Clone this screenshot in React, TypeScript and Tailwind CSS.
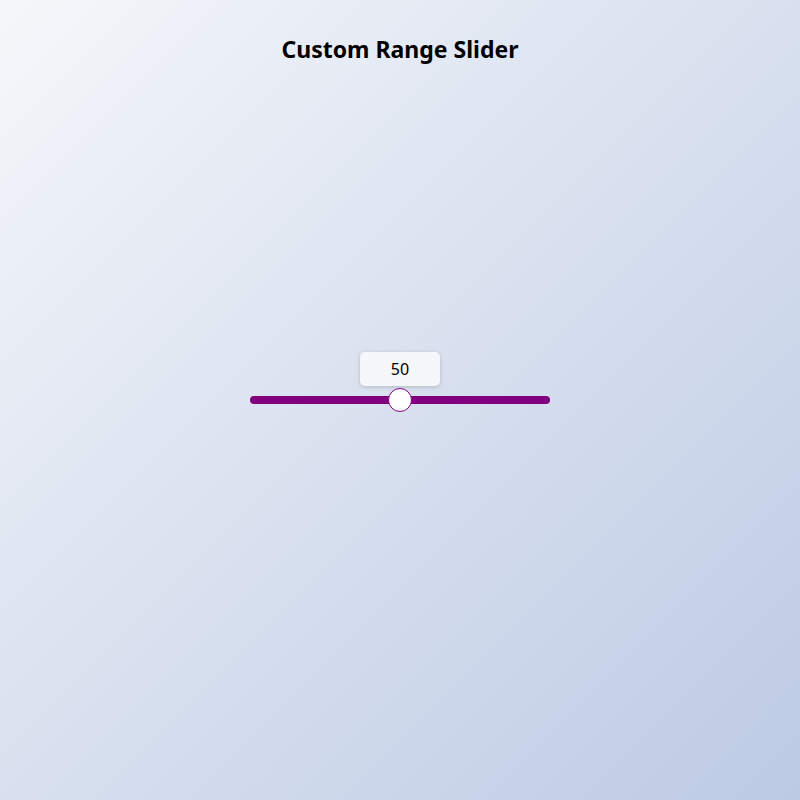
import { useState } from "react";

export default function App() {
  const [value] = useState(50);

  return (
    <div
      className="h-[800px] w-full flex flex-col items-center pb-[66px] bg-[linear-gradient(135deg,#f5f7fa_0%,#bccae4_100%)]"
      style={{ fontFamily: '"Noto Sans", "Open Sans", sans-serif' }}
    >
      <h1 className="mt-[33px] h-[33px] text-[23px] leading-[33px] font-bold text-black">
        Custom Range Slider
      </h1>

      <div className="flex-1 flex items-center justify-center">
        <div className="relative w-[300px] h-[24px] flex items-center">
          {/* value bubble */}
          <div
            className="absolute bottom-[26px] -translate-x-1/2 w-[80px] h-[34px] rounded-[5px] bg-[#f5f7fa] shadow-[0_1px_4px_rgba(0,0,0,0.18)] flex items-center justify-center text-[16px] text-black"
            style={{ left: `${value}%` }}
          >
            {value}
          </div>

          {/* track */}
          <div className="w-full h-[8px] rounded-full bg-[#800080]" />

          {/* thumb */}
          <div
            className="absolute top-0 -translate-x-1/2 w-[24px] h-[24px] rounded-full bg-white border border-[#800080]"
            style={{ left: `${value}%` }}
          />
        </div>
      </div>
    </div>
  );
}
